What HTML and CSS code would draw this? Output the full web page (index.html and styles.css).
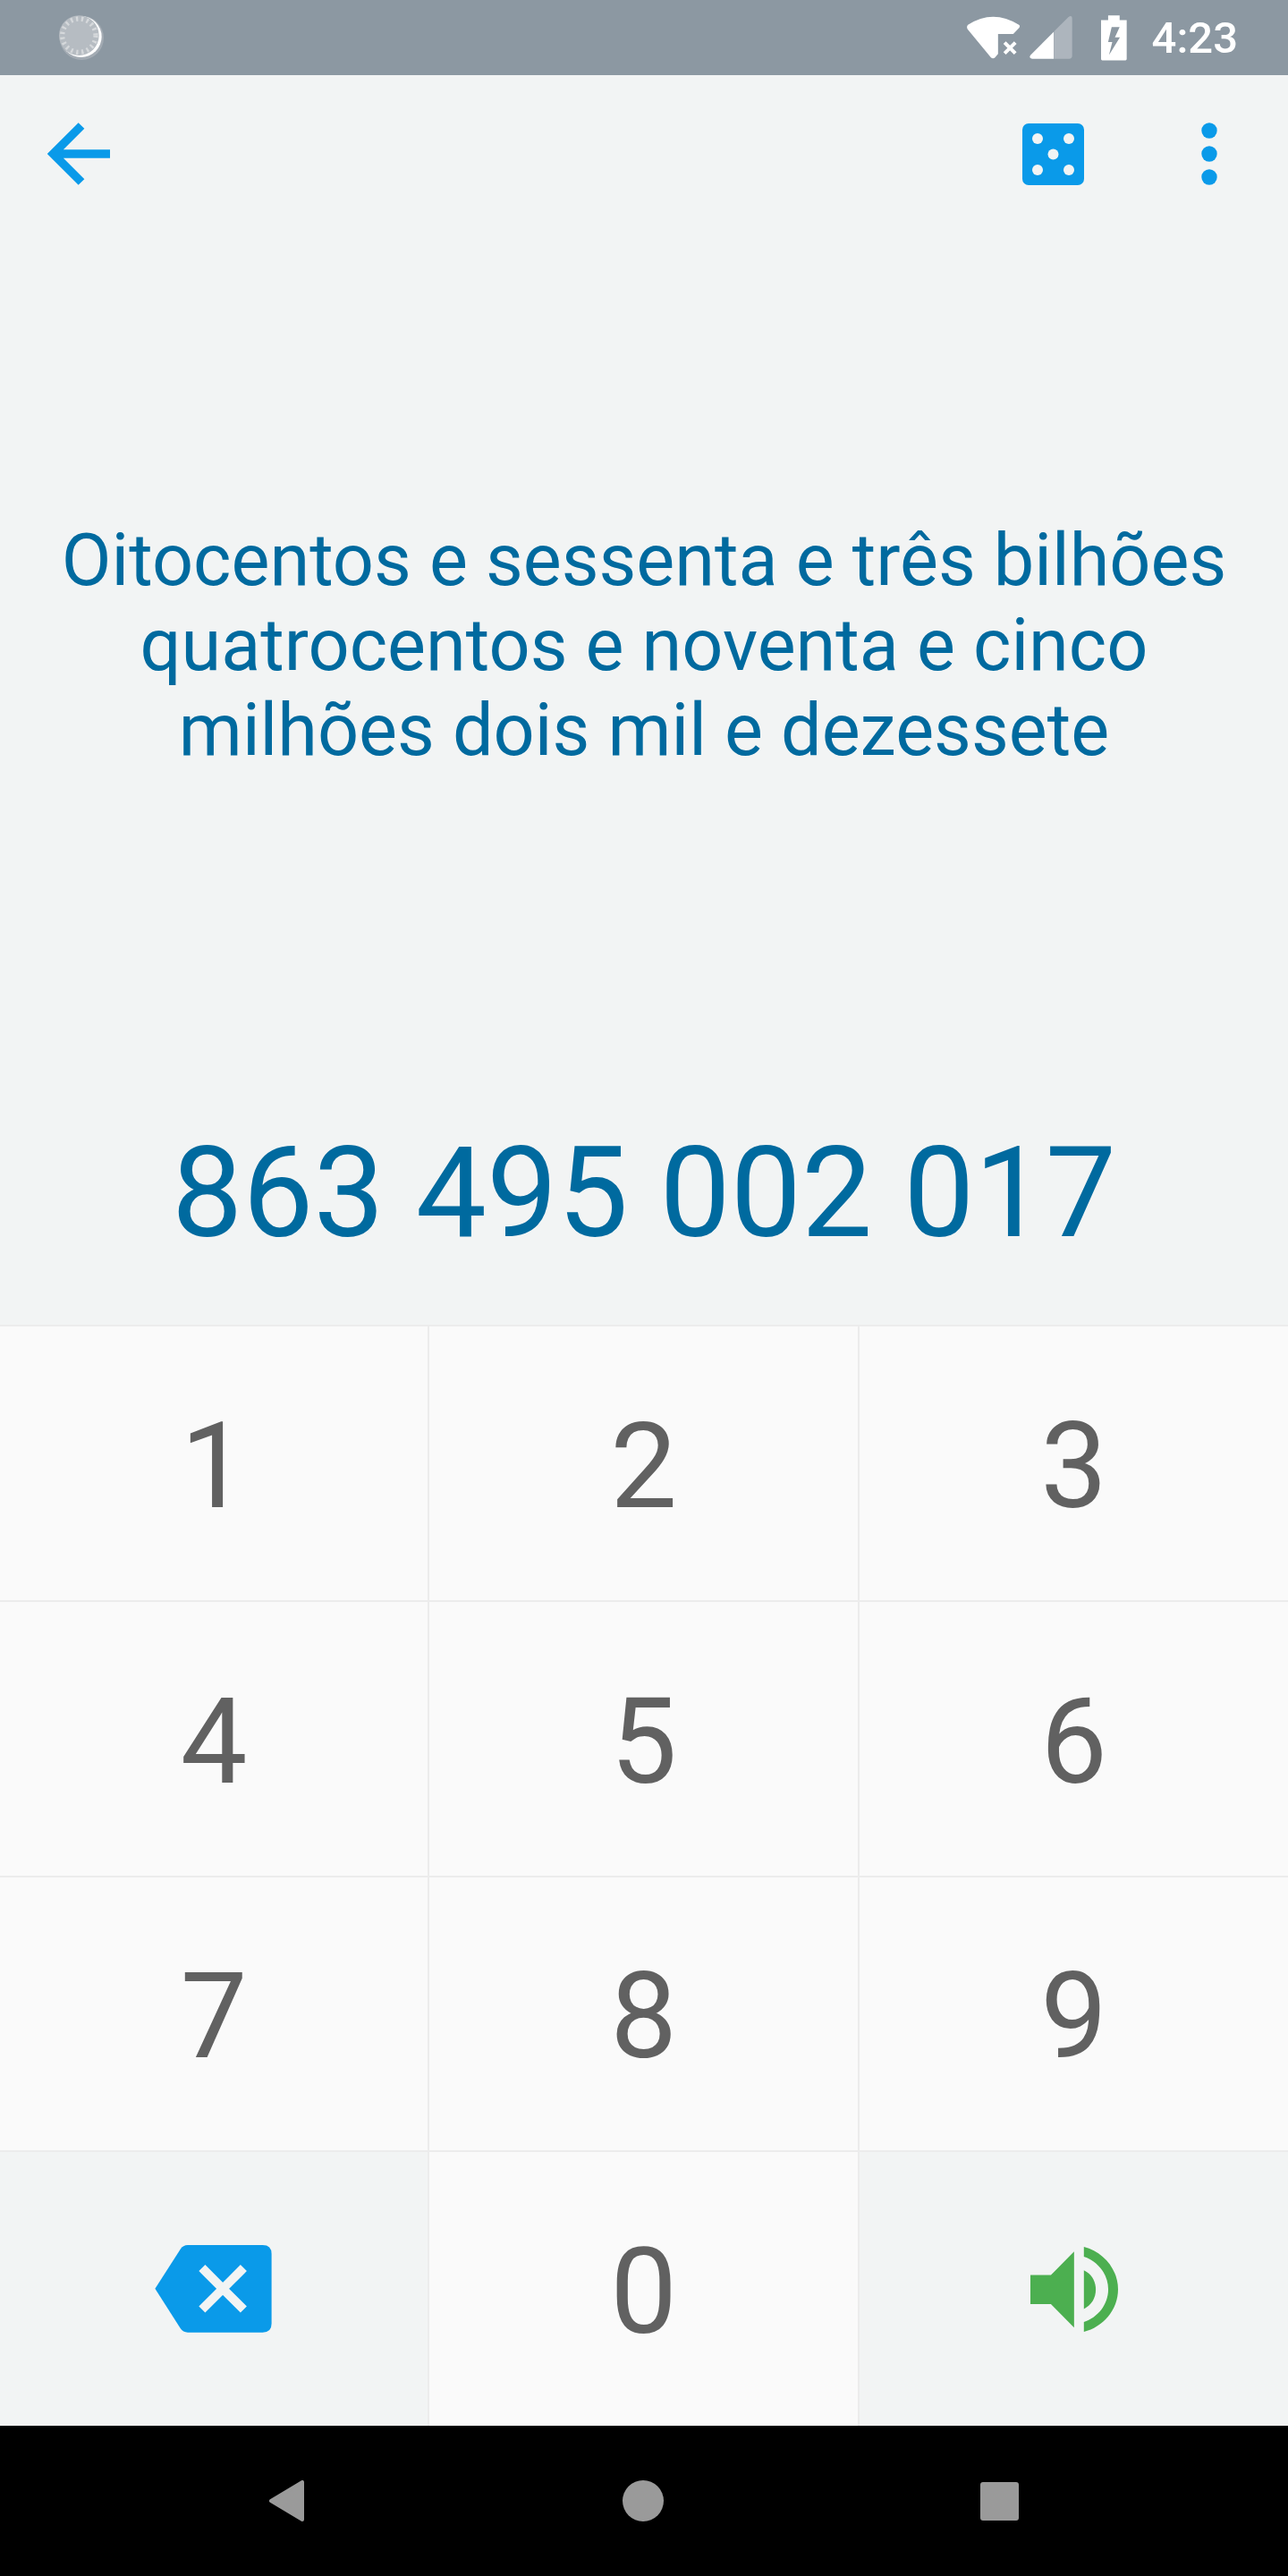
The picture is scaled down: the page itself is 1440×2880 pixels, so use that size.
FILE: index.html
```html
<!DOCTYPE html>
<html lang="pt">
<head>
  <meta charset="UTF-8">
  <meta name="viewport" content="width=device-width, initial-scale=1.0">
  <title>Números por extenso</title>
  <link rel="stylesheet" href="styles.css">
</head>
<body>
  <div class="status-bar">
    <svg class="notif-icon" viewBox="198 50 150 150">
      <circle cx="274" cy="126" r="74" fill="#a3abb3"/>
      <circle cx="272" cy="122" r="69" fill="#fff"/>
      <circle cx="265" cy="118" r="67" fill="#b6bcc2"/>
      <circle cx="265" cy="118" r="56" fill="none" stroke="#d5d8db" stroke-width="16" stroke-dasharray="7 11"/>
    </svg>
    <div class="status-right">
      <svg class="wifi-icon" viewBox="125 50 185 150">
        <path fill="#fff" d="M131 82Q215 28 302 82Q307 86 303 92L283 113H232V180L222 192Q215 198 208 192L130 97Q125 88 131 82Z"/>
        <path stroke="#fff" stroke-width="12" d="M254 142L290 178M290 142L254 178"/>
      </svg>
      <svg class="signal-icon" viewBox="335 58 143 143">
        <path fill="#fff" d="M338 188L416 110V200H344Q332 200 338 188Z"/>
        <path fill="#adb5bd" d="M417 109L464 62Q477 52 477 68V190Q477 200 467 200H417Z"/>
      </svg>
      <svg class="battery-icon" viewBox="573 48 88 153">
        <path fill="#fff" fill-rule="evenodd" d="M597 48H636V64H660V196Q660 200 656 200H577Q573 200 573 196V64H597ZM609 87L597 138H611L600 182L637 122H620L636 87Z"/>
      </svg>
      <span class="clock">4:23</span>
    </div>
  </div>

  <div class="main">
    <div class="toolbar">
      <svg class="back-icon" viewBox="0 0 70 70">
        <path fill="none" stroke="#0a9ae9" stroke-width="9.5" d="M38 3.5L6.5 35L38 66.5M6.5 35H70"/>
      </svg>
      <svg class="dice-icon" viewBox="0 0 69 69">
        <rect width="69" height="69" rx="7" fill="#0a9ae9"/>
        <circle cx="17" cy="17" r="6" fill="#f2f4f4"/>
        <circle cx="52" cy="17" r="6" fill="#f2f4f4"/>
        <circle cx="34.500" cy="34.500" r="6" fill="#f2f4f4"/>
        <circle cx="17" cy="52" r="6" fill="#f2f4f4"/>
        <circle cx="52" cy="52" r="6" fill="#f2f4f4"/>
      </svg>
      <svg class="more-icon" viewBox="0 0 18 70">
        <circle cx="9" cy="9" r="8.700" fill="#0a9ae9"/>
        <circle cx="9" cy="35" r="8.700" fill="#0a9ae9"/>
        <circle cx="9" cy="61" r="8.700" fill="#0a9ae9"/>
      </svg>
    </div>
    <p class="words">Oitocentos e sessenta e três bilhões quatrocentos e noventa e cinco milhões dois mil e dezessete</p>
    <p class="number">863 495 002 017</p>
  </div>

  <div class="keypad">
    <div class="key">1</div>
    <div class="key">2</div>
    <div class="key">3</div>
    <div class="key">4</div>
    <div class="key">5</div>
    <div class="key">6</div>
    <div class="key">7</div>
    <div class="key">8</div>
    <div class="key">9</div>
    <div class="key key-alt">
      <svg class="erase-icon" viewBox="220 208 392 295">
        <path fill="#0a9ae9" d="M220 355L305 222Q314 208 330 208H582Q612 208 612 238V472Q612 502 582 502H330Q314 502 305 488Z"/>
        <path stroke="#f2f4f4" stroke-width="30" d="M378 285L518 425M518 285L378 425"/>
      </svg>
    </div>
    <div class="key">0</div>
    <div class="key key-alt">
      <svg class="speaker-icon" viewBox="214 212 295 286">
        <path fill="#4caf50" d="M214 307H283L361 228V484L283 405H214Z"/>
        <path fill="#4caf50" d="M394 291C420 303 434 328 434 356C434 384 420 408 394 421Z"/>
        <path fill="#4caf50" d="M394 212C458 228 509 286 509 355C509 425 458 482 394 498V465C440 450 476 407 476 355C476 303 440 260 394 245Z"/>
      </svg>
    </div>
  </div>

  <div class="nav-bar">
    <svg class="nav-back" viewBox="0 0 39 46">
      <path fill="#9a9a9a" stroke="#9a9a9a" stroke-width="4" stroke-linejoin="round" d="M37 2V44L2 23Z"/>
    </svg>
    <div class="nav-home"></div>
    <div class="nav-recent"></div>
  </div>
</body>
</html>
```

FILE: styles.css
```css
html, body {
  margin: 0;
  padding: 0;
}
body {
  width: 1440px;
  height: 2880px;
  display: flex;
  flex-direction: column;
  overflow: hidden;
  font-family: Roboto, Arial, sans-serif;
  background-color: #f2f4f4;
}
svg {
  display: block;
  flex: none;
}

/* status bar */
.status-bar {
  height: 84px;
  padding: 0 56px 0 66px;
  display: flex;
  align-items: center;
  justify-content: space-between;
  background-color: #8c98a2;
}
.notif-icon {
  width: 50px;
  height: 50px;
}
.status-right {
  display: flex;
  align-items: center;
}
.wifi-icon {
  width: 62px;
  height: 50px;
  margin-right: 9px;
}
.signal-icon {
  width: 48px;
  height: 48px;
  margin-right: 32px;
}
.battery-icon {
  width: 29px;
  height: 51px;
  margin-right: 28px;
}
.clock {
  color: #fff;
  font-size: 49px;
  font-weight: 500;
}

/* top part */
.main {
  flex: 1;
  display: flex;
  flex-direction: column;
}
.toolbar {
  padding: 53px 79px 0 53px;
  display: flex;
  align-items: center;
}
.back-icon {
  width: 70px;
  height: 70px;
  margin-right: auto;
}
.dice-icon {
  width: 69px;
  height: 69px;
  margin-right: 131px;
}
.more-icon {
  width: 18px;
  height: 70px;
}
.words {
  margin: 372px 50px 0;
  text-align: center;
  color: #006a9f;
  font-size: 81px;
  line-height: 95px;
}
.number {
  margin: 0;
  margin-top: auto;
  padding-bottom: 65px;
  text-align: center;
  color: #006a9f;
  font-size: 141px;
  line-height: 164px;
}

/* keypad */
.keypad {
  height: 1231px;
  display: grid;
  grid-template-columns: 480px 481px 479px;
  grid-template-rows: repeat(4, 1fr);
  background-color: #fafafa;
}
.key {
  padding-top: 7px;
  display: flex;
  align-items: center;
  justify-content: center;
  border-top: 2px solid #ececec;
  border-right: 2px solid #ececec;
  color: #616161;
  font-size: 133px;
}
.key:nth-child(3n) {
  border-right: none;
}
.key-alt {
  padding-top: 0;
  background-color: #f2f4f4;
}
.erase-icon {
  width: 131px;
  height: 98px;
  margin-left: -1px;
}
.speaker-icon {
  width: 98px;
  height: 95px;
}

/* bottom bar */
.nav-bar {
  height: 168px;
  padding-left: 301px;
  display: flex;
  align-items: center;
  background-color: #000;
}
.nav-back {
  width: 39px;
  height: 46px;
  margin-right: 356px;
}
.nav-home {
  width: 46px;
  height: 46px;
  margin-right: 354px;
  border-radius: 50%;
  background-color: #9a9a9a;
}
.nav-recent {
  width: 43px;
  height: 43px;
  border-radius: 3px;
  background-color: #9a9a9a;
}
```
